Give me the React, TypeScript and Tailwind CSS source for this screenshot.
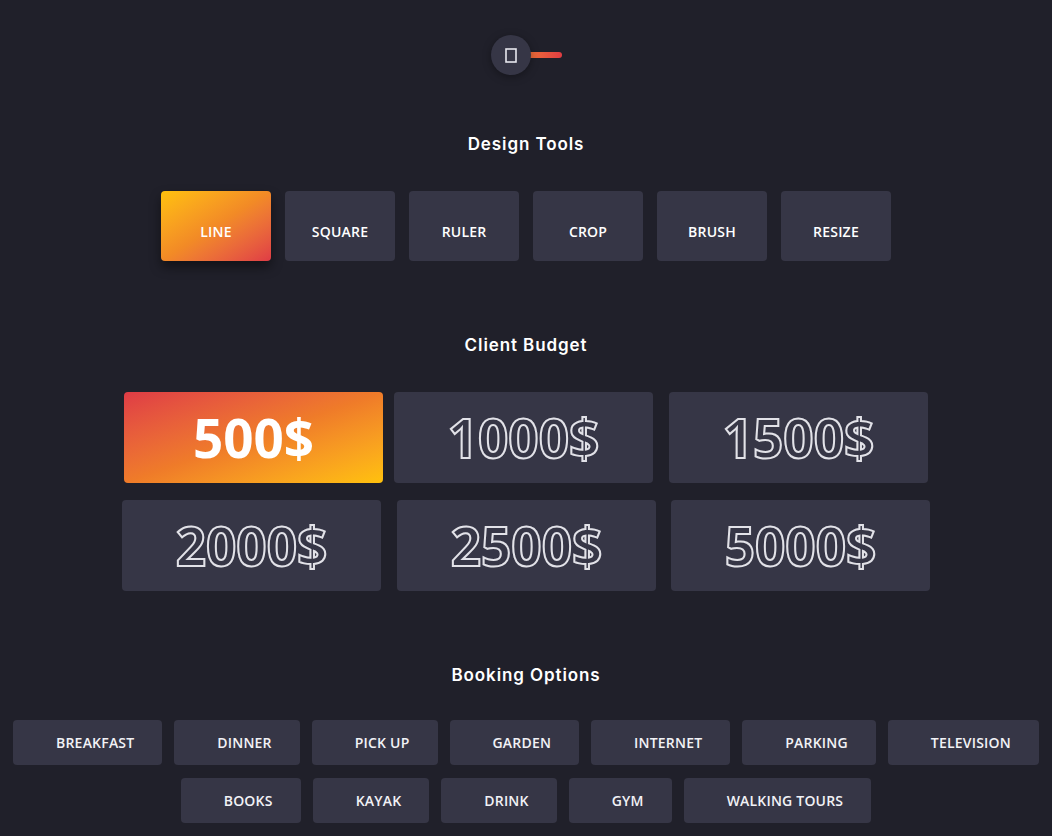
const tools = ['Line', 'Square', 'Ruler', 'Crop', 'Brush', 'Resize']

// gaps between budget cards are uneven in the design, keep them per card
const budgetRows = [
  [{ v: '500$', ml: '' }, { v: '1000$', ml: 'ml-[11px]' }, { v: '1500$', ml: 'ml-[16px]' }],
  [{ v: '2000$', ml: '' }, { v: '2500$', ml: 'ml-[16px]' }, { v: '5000$', ml: 'ml-[15px]' }],
]

const bookingRows = [
  ['Breakfast', 'Dinner', 'Pick up', 'Garden', 'Internet', 'Parking', 'Television'],
  ['Books', 'Kayak', 'Drink', 'Gym', 'Walking tours'],
]

function Title({ children, className = '' }: { children: string; className?: string }) {
  return (
    <h2 className={`text-[17px] leading-[24px] font-semibold tracking-[0.9px] text-white font-['Inter',sans-serif] ${className}`}>
      {children}
    </h2>
  )
}

function Toggle() {
  return (
    <div className="relative w-[71px] h-[40px]">
      <div className="absolute left-[16px] top-[17px] w-[55px] h-[6px] rounded-full bg-gradient-to-r from-[#f6892a] to-[#e13c42]" />
      <div className="absolute left-0 top-0 w-[40px] h-[40px] rounded-full bg-[#363646] shadow-[0_2px_8px_rgba(0,0,0,0.35)] flex items-center justify-center">
        <svg width="12" height="15" viewBox="0 0 12 15">
          <rect x="1" y="1" width="10" height="13" fill="none" stroke="#e8e8ee" strokeWidth="1.6" />
        </svg>
      </div>
    </div>
  )
}

export default function App() {
  return (
    <div className="min-h-screen w-full bg-[#20202a] flex flex-col items-center pt-[35px] pb-[13px] font-['Open_Sans',sans-serif]">
      <Toggle />

      <Title className="mt-[57px]">Design Tools</Title>
      <div className="mt-[35px] flex gap-[14px]">
        {tools.map((t, i) => (
          <button
            key={t}
            className={`w-[110px] h-[70px] rounded-[4px] pt-[10px] flex items-center justify-center text-[14px] font-semibold uppercase tracking-[0.2px] text-white ${
              i === 0
                ? 'bg-gradient-to-br from-[#ffc10b] via-[#f28a26] to-[#df3b45] shadow-[0_6px_12px_rgba(0,0,0,0.45)]'
                : 'bg-[#363646]'
            }`}
          >
            {t}
          </button>
        ))}
      </div>

      <Title className="mt-[72px]">Client Budget</Title>
      <div className="mt-[35px] flex flex-col items-center gap-[17px]">
        {budgetRows.map((row, r) => (
          <div key={r} className="flex">
            {row.map((b, i) => (
              <button
                key={b.v}
                className={`${b.ml} w-[259px] h-[91px] rounded-[4px] flex items-center justify-center text-[53px] leading-none font-bold ${
                  r === 0 && i === 0
                    ? 'bg-gradient-to-br from-[#df3b45] via-[#ef7b29] to-[#ffc10b] text-white'
                    : 'bg-[#363646] text-transparent [-webkit-text-stroke:2px_#e2e2e8]'
                }`}
              >
                {b.v}
              </button>
            ))}
          </div>
        ))}
      </div>

      <Title className="mt-[72px]">Booking Options</Title>
      <div className="mt-[33px] flex flex-col items-center gap-[13px]">
        {bookingRows.map((row, r) => (
          <div key={r} className="flex gap-3">
            {row.map(o => (
              <button
                key={o}
                className="h-[45px] rounded-[4px] bg-[#363646] pl-[43px] pr-[28px] flex items-center text-[14px] font-semibold uppercase tracking-[0.2px] text-[#f2f2f6] whitespace-nowrap"
              >
                {o}
              </button>
            ))}
          </div>
        ))}
      </div>
    </div>
  )
}
